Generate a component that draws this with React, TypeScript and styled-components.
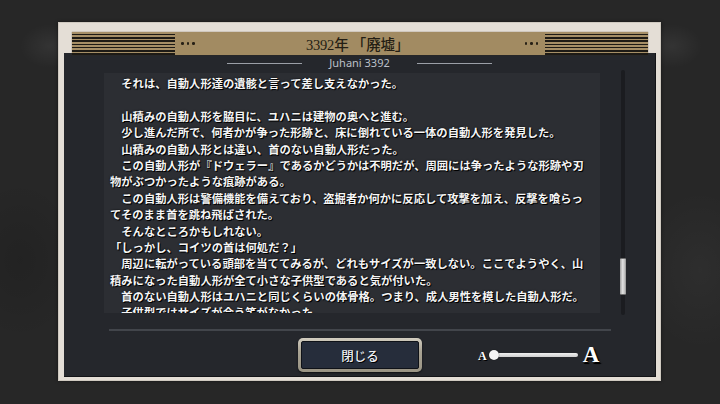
import React from "react";
import styled, { createGlobalStyle } from "styled-components";

const Global = createGlobalStyle`
  html, body { margin: 0; padding: 0; background: #262626; }
  * { box-sizing: border-box; }
`;

const Screen = styled.div`
  width: 720px;
  height: 404px;
  overflow: hidden;
  padding: 22px 0 0 58px;
  background:
    radial-gradient(ellipse 30px 22px at 50px 46px, rgba(255,255,255,0.06), rgba(255,255,255,0) 100%),
    radial-gradient(ellipse 30px 22px at 672px 46px, rgba(255,255,255,0.06), rgba(255,255,255,0) 100%),
    radial-gradient(ellipse 60px 80px at 20px 260px, rgba(0,0,0,0.12), rgba(0,0,0,0) 100%),
    radial-gradient(ellipse 60px 80px at 700px 270px, rgba(255,255,255,0.03), rgba(255,255,255,0) 100%),
    #272727;
  font-family: "Noto Sans CJK JP", "Noto Sans", sans-serif;
`;

const Frame = styled.div`
  width: 603px;
  height: 359px;
  background: #e4ded6;
  border: 1px solid #cfc9c0;
  padding: 9px 4px 3px 5px;
  display: flex;
  flex-direction: column;
  box-shadow: 0 0 3px rgba(0,0,0,0.5);
`;

const Header = styled.div`
  position: relative;
  z-index: 1;
  margin: 0 8px -2px 8px;
  height: 23px;
  display: flex;
  align-items: center;
  background: #a28b62;
  box-shadow: 0 0 1px rgba(60,45,20,0.7);
`;

const Stripes = styled.div`
  width: 103px;
  height: 100%;
  background: repeating-linear-gradient(
    to bottom,
    #a58e66 0px,
    #a58e66 1.6px,
    #1d1a15 1.6px,
    #1d1a15 3.3px
  );
`;

const Dots = styled.div<{ $side: "left" | "right" }>`
  display: flex;
  gap: 3px;
  margin: ${(p) => (p.$side === "left" ? "0 0 0 6px" : "0 7px 0 0")};
`;

const Dot = styled.span`
  width: 2.5px;
  height: 2.5px;
  border-radius: 50%;
  background: #262016;
`;

const Title = styled.div`
  flex: 1;
  text-align: center;
  font-family: "Liberation Serif", "Noto Sans CJK JP", serif;
  font-size: 14.5px;
  font-weight: 500;
  color: #241e14;
  letter-spacing: -0.2px;
  padding-right: 4px;
`;

const Panel = styled.div`
  flex: 1;
  background: #25272c;
  border-right: 1px solid #131417;
  border-bottom: 1px solid #131417;
  display: flex;
  flex-direction: column;
  padding-top: 3px;
`;

const Subheader = styled.div`
  height: 14px;
  display: flex;
  align-items: center;
  justify-content: center;
  gap: 27px;
`;

const Rule = styled.span`
  width: 75px;
  height: 1px;
  background: #9b9fa7;
`;

const Speaker = styled.span`
  font-family: "Noto Sans", "Open Sans", sans-serif;
  font-size: 11px;
  color: #bcc0c8;
  line-height: 14px;
`;

const Body = styled.div`
  margin-top: 3px;
  height: 240px;
  display: flex;
  padding-left: 40px;
`;

const TextBox = styled.div`
  width: 496px;
  height: 240px;
  background: #2c2e33;
  overflow: hidden;
  padding: 2px 0 0 6px;
`;

const Line = styled.div<{ $indent?: boolean }>`
  height: 16.4px;
  line-height: 16.4px;
  white-space: nowrap;
  font-size: 11.3px;
  font-weight: 700;
  color: #f5f5f5;
  text-shadow: 1px 1px 0 #000, 0 0 2px #000;
  padding-left: ${(p) => (p.$indent ? "11.3px" : "0")};
`;

const ScrollTrack = styled.div`
  position: relative;
  margin: -3px 0 0 21px;
  width: 4px;
  height: 245px;
  background: #1b1c20;
  border-radius: 2px;
`;

const ScrollThumb = styled.div`
  position: absolute;
  left: -1px;
  top: 188px;
  width: 6px;
  height: 37px;
  border-radius: 1px;
  background: linear-gradient(to right, #9c9c9c, #e2e2e2 45%, #bdbdbd 80%, #8f8f8f);
  border-top: 1px solid #6e6e6e;
  border-bottom: 1px solid #6e6e6e;
`;

const Divider = styled.div`
  margin: 16px 0 0 45px;
  width: 502px;
  height: 2px;
  background: #42454b;
`;

const Footer = styled.div`
  margin-top: 7px;
  padding-left: 234px;
  display: flex;
  align-items: center;
`;

const CloseButton = styled.button`
  width: 124px;
  height: 34px;
  padding: 3px;
  border: none;
  border-radius: 5px;
  background: linear-gradient(to bottom, #d2cdc0, #a9a393 40%, #9a9484);
  box-shadow: 0 1px 2px rgba(0,0,0,0.6);
  display: flex;
  cursor: pointer;
`;

const ButtonFace = styled.span`
  flex: 1;
  display: flex;
  align-items: center;
  justify-content: center;
  background: #262d3b;
  border: 1px solid #0f1218;
  border-radius: 2px;
  font-family: "Noto Sans CJK JP", sans-serif;
  font-size: 12.5px;
  font-weight: 500;
  color: #eef0f4;
  text-shadow: 1px 1px 0 #000;
`;

const SizeControl = styled.div`
  margin-left: 56px;
  display: flex;
  align-items: center;
`;

const Glyph = styled.span<{ $big?: boolean }>`
  font-family: "Liberation Serif", "DejaVu Serif", serif;
  font-weight: 700;
  font-size: ${(p) => (p.$big ? "23px" : "12px")};
  line-height: 1;
  color: #ffffff;
  text-shadow: ${(p) => (p.$big ? "1px 2px 0 #000, 2px 2px 1px #000" : "1px 1px 0 #000")};
  margin-left: ${(p) => (p.$big ? "5px" : "0")};
  margin-top: ${(p) => (p.$big ? "-2px" : "1px")};
`;

const SliderTrack = styled.div`
  position: relative;
  margin-left: 2px;
  width: 89px;
  height: 4px;
  border-radius: 2px;
  background: linear-gradient(to bottom, #f0f0f0, #cfcfcf);
`;

const Knob = styled.span`
  position: absolute;
  left: 0;
  top: -3px;
  width: 10px;
  height: 10px;
  border-radius: 50%;
  background: #f4f4f4;
  box-shadow: 0 0 1px #000;
`;

const lines: { t: string; i?: boolean }[] = [
  { t: "それは、自動人形達の遺骸と言って差し支えなかった。", i: true },
  { t: "\u00a0" },
  { t: "山積みの自動人形を脇目に、ユハニは建物の奥へと進む。", i: true },
  { t: "少し進んだ所で、何者かが争った形跡と、床に倒れている一体の自動人形を発見した。", i: true },
  { t: "山積みの自動人形とは違い、首のない自動人形だった。", i: true },
  { t: "この自動人形が『ドウェラー』であるかどうかは不明だが、周囲には争ったような形跡や刃", i: true },
  { t: "物がぶつかったような痕跡がある。" },
  { t: "この自動人形は警備機能を備えており、盗掘者か何かに反応して攻撃を加え、反撃を喰らっ", i: true },
  { t: "てそのまま首を跳ね飛ばされた。" },
  { t: "そんなところかもしれない。", i: true },
  { t: "「しっかし、コイツの首は何処だ？」" },
  { t: "周辺に転がっている頭部を当ててみるが、どれもサイズが一致しない。ここでようやく、山", i: true },
  { t: "積みになった自動人形が全て小さな子供型であると気が付いた。" },
  { t: "首のない自動人形はユハニと同じくらいの体骨格。つまり、成人男性を模した自動人形だ。", i: true },
  { t: "子供型ではサイズが合う筈がなかった。", i: true },
];

export default function App() {
  return (
    <>
      <Global />
      <Screen>
        <Frame>
          <Header>
            <Stripes />
            <Dots $side="left">
              <Dot />
              <Dot />
              <Dot />
            </Dots>
            <Title>3392年 「廃墟」</Title>
            <Dots $side="right">
              <Dot />
              <Dot />
              <Dot />
            </Dots>
            <Stripes />
          </Header>
          <Panel>
            <Subheader>
              <Rule />
              <Speaker>Juhani 3392</Speaker>
              <Rule />
            </Subheader>
            <Body>
              <TextBox>
                {lines.map((l, k) => (
                  <Line key={k} $indent={l.i}>
                    {l.t}
                  </Line>
                ))}
              </TextBox>
              <ScrollTrack>
                <ScrollThumb />
              </ScrollTrack>
            </Body>
            <Divider />
            <Footer>
              <CloseButton>
                <ButtonFace>閉じる</ButtonFace>
              </CloseButton>
              <SizeControl>
                <Glyph>A</Glyph>
                <SliderTrack>
                  <Knob />
                </SliderTrack>
                <Glyph $big>A</Glyph>
              </SizeControl>
            </Footer>
          </Panel>
        </Frame>
      </Screen>
    </>
  );
}
